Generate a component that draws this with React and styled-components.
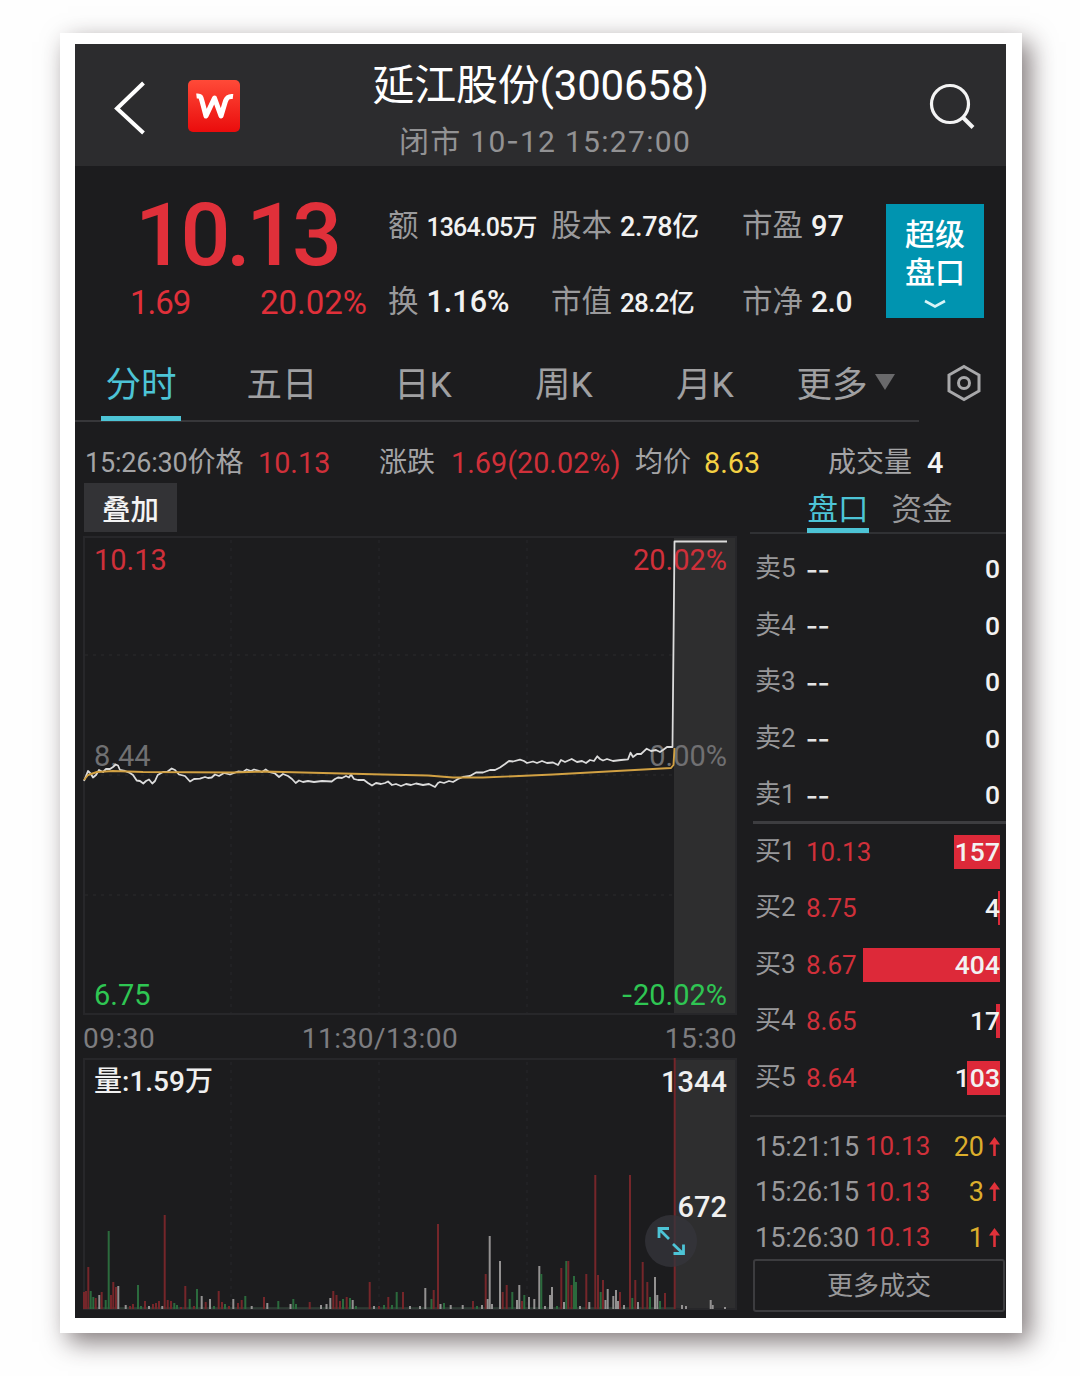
import { useState } from "react";
import styled, { createGlobalStyle } from "styled-components";

const GlobalStyle = createGlobalStyle`
* {
    box-sizing: border-box;
}
body {
    margin: 0;
    background: #fefefe;
    font-family: Roboto, "Noto Sans CJK SC", sans-serif;
}
button {
    font-family: inherit;
    border: none;
    background: none;
    padding: 0;
    margin: 0;
}
`;

const RED = "#d0303a";
const GREY = "#98989a";
const CYAN = "#4dc4d6";
const GREEN = "#2fc653";

const Page = styled.div`
width: 1080px;
height: 1376px;
padding: 33px 0 0 60px;
overflow: hidden;
`;

const Frame = styled.div`
width: 962px;
height: 1300px;
padding: 11px 16px 15px 15px;
background: #fff;
box-shadow: 8px 9px 24px 0 rgba(40, 25, 28, 0.58);
`;

const Screen = styled.main`
width: 931px;
height: 1274px;
background: #1c1c1e;
color: #f2f2f2;
overflow: hidden;
`;

const Header = styled.header`
display: grid;
grid-template-columns: 1fr auto 1fr;
height: 122px;
background: #2c2c2e;
`;

const HeaderLeft = styled.div`
display: flex;
align-items: flex-start;
padding: 36px 0 0 38px;
gap: 41px;
`;

const HeaderRight = styled.div`
display: flex;
justify-content: flex-end;
align-items: flex-start;
padding: 38px 30px 0 0;
`;

const Logo = styled.div`
width: 52px;
height: 52px;
border-radius: 5px;
background: linear-gradient(#ff4a38, #ea0c0c);
`;

const TitleBox = styled.div`
display: flex;
flex-direction: column;
align-items: center;
padding-top: 16px;
`;

const Title = styled.h1`
margin: 0;
font-size: 42px;
font-weight: 400;
line-height: 51px;
letter-spacing: -0.2px;
color: #fff;
`;

const Subtitle = styled.div`
margin-left: 9px;
font-size: 30px;
line-height: 62px;
letter-spacing: 1.3px;
color: #929294;
white-space: pre;
`;

/* Roboto's hyphen is too short for dates and signed values */
const Dash = styled.span`
font-family: "Noto Sans CJK SC", sans-serif;
font-size: 1.15em;
line-height: 1px;
`;

const Quote = styled.section`
display: grid;
grid-template-columns: 313px 163px 191px 144px 98px;
padding-top: 38px;
height: 179px;
`;

const PriceBox = styled.div`
padding-left: 55px;
color: #e0303a;
`;

const BigPrice = styled.div`
padding-left: 5px;
font-size: 88px;
font-weight: 500;
line-height: 62px;
letter-spacing: -4.4px;
`;

const ChangeRow = styled.div`
display: flex;
justify-content: space-between;
width: 237px;
margin-top: 20px;
font-size: 33px;
line-height: 34px;

span:first-child {
    letter-spacing: -1px;
}
`;

const StatColumn = styled.dl`
display: grid;
grid-template-rows: 44px 44px;
row-gap: 32px;
margin: 0;
`;

const Stat = styled.div`
display: flex;
align-items: baseline;
line-height: 44px;
white-space: nowrap;

dt {
    font-size: 30.5px;
    color: #9a9a9c;
}
dd {
    margin: 0 0 0 8px;
    font-size: ${({ $size }) => $size}px;
    font-weight: 500;
    letter-spacing: ${({ $spacing }) => $spacing || 0}px;
}
`;

const SuperButton = styled.button`
display: flex;
flex-direction: column;
align-items: center;
height: 114px;
padding-top: 12px;
background: #0094b0;
color: #fff;
font-size: 30px;
font-weight: 500;
line-height: 38px;

svg {
    margin-top: 7px;
}
`;

const TabBar = styled.nav`
display: flex;
width: 844px;
height: 77px;
padding-left: 26px;
gap: 61px;
border-bottom: 2px solid #37373a;
`;

const TabRow = styled.div`
display: flex;
justify-content: space-between;
padding-right: 25px;
`;

const Tab = styled.button`
display: flex;
align-items: center;
justify-content: center;
width: ${({ $wide }) => ($wide ? "99px" : "80px")};
height: 76px;
flex: none;
margin-left: ${({ $wide }) => ($wide ? "-10px" : "0")};
font-size: 35.5px;
color: ${({ $active }) => ($active ? CYAN : "#a0a0a2")};
border-bottom: 5px solid ${({ $active }) => ($active ? CYAN : "transparent")};
padding-top: 2px;
white-space: nowrap;

svg {
    margin-left: 7px;
}
`;

const SettingsButton = styled.button`
height: 79px;
`;

const InfoRow = styled.div`
display: grid;
grid-template-columns: 173px 121px 72px 184px 69px 124px 99px 40px;
padding-left: 10px;
height: 59px;
line-height: 78px;
color: #a4a4a6;
white-space: nowrap;
`;

const Info = styled.span`
font-size: ${({ $label }) => ($label ? "28px" : "28.8px")};
color: ${({ $color }) => $color || "inherit"};
font-weight: ${({ $bold }) => ($bold ? 500 : 400)};
`;

const Clock = styled.span`
font-size: 27px;
letter-spacing: -0.2px;
`;

const Columns = styled.div`
display: grid;
grid-template-columns: 654px 256px;
column-gap: 13px;
padding-left: 8px;
`;

const OverlayButton = styled.button`
display: block;
width: 93px;
height: 49px;
margin: 0 0 4px 1px;
background: #333336;
color: #f4f4f4;
font-size: 28.5px;
font-weight: 500;
`;

const ChartBox = styled.div`
position: relative;
height: ${({ $height }) => $height}px;

> svg {
    display: block;
}
`;

const ChartLabel = styled.span`
position: absolute;
top: ${({ $top }) => $top}px;
${({ $right }) => ($right ? "right: 10px;" : "left: 11px;")}
font-size: ${({ $size }) => $size || 29}px;
font-weight: ${({ $bold }) => ($bold ? 500 : 400)};
line-height: 36px;
color: ${({ $color }) => $color};
`;

const TimeAxis = styled.div`
display: flex;
justify-content: space-between;
height: 43px;
font-size: 28px;
line-height: 47px;
letter-spacing: 0.5px;
color: #7d7d80;

span:nth-child(2) {
    margin-right: 60px;
}
`;

const ExpandButton = styled.button`
position: absolute;
left: 562px;
top: 157px;
width: 52px;
height: 52px;
border-radius: 50%;
background: rgba(54, 54, 60, 0.75);
`;

const BookTabs = styled.div`
display: flex;
gap: 22px;
height: 51px;
padding-left: 57px;
border-bottom: 2px solid #303134;
`;

const BookTab = styled.button`
width: 62px;
height: 50px;
font-size: 30.5px;
padding-top: 2px;
color: ${({ $active }) => ($active ? CYAN : "#98989a")};
border-bottom: 5px solid ${({ $active }) => ($active ? CYAN : "transparent")};
`;

const BookSide = styled.div`
padding-top: ${({ $top }) => $top}px;
`;

const BookRow = styled.div`
display: grid;
grid-template-columns: 51px 1fr auto;
align-items: center;
height: 56.5px;
padding: 0 6px 0 5px;
font-size: 26.5px;
`;

const Level = styled.span`
line-height: 34px;
margin-top: -2px;
font-size: 26px;
color: ${GREY};
`;

const BookPrice = styled.span`
line-height: 34px;
font-size: 26px;
color: ${RED};
`;

const EmptyPrice = styled.span`
margin-top: -5px;
font-family: "Noto Sans CJK SC", sans-serif;
font-size: 34px;
line-height: 34px;
color: #e4e4e4;
`;

const Quantity = styled.span`
position: relative;
font-size: 26.5px;
font-weight: 500;
line-height: 34px;
color: #f2f2f2;
`;

const QuantityBar = styled.i`
position: absolute;
right: 0;
top: 0;
height: 34px;
background: #dd2939;
`;

const QuantityText = styled.span`
position: relative;
`;

const BookDivider = styled.div`
height: 3px;
margin: -3px 0 0 3px;
background: #3d3d40;
`;

const Trades = styled.div`
margin-top: 9px;
padding-top: 7px;
border-top: 2px solid #303032;
`;

const Trade = styled.div`
display: grid;
grid-template-columns: 110px 76px 1fr 16px;
align-items: center;
height: 45.5px;
padding: 0 6px 0 5px;
font-size: 27px;
color: ${GREY};
`;

const TradePrice = styled.span`
color: ${RED};
font-size: 26px;
line-height: 32px;
margin-top: -1px;
`;

const TradeCount = styled.span`
color: #dcae2c;
text-align: right;
`;

const MoreButton = styled.button`
display: block;
width: 252px;
height: 53px;
margin: -2px 0 0 3px;
padding-bottom: 3px;
border: 2px solid #3c3c3f;
border-radius: 3px;
font-size: 26px;
color: ${GREY};
`;

const TABS = ["分时", "五日", "日K", "周K", "月K", "更多"];

const SELLS = [5, 4, 3, 2, 1];

const BUYS = [
    { level: 1, price: "10.13", amount: 157, bar: 46 },
    { level: 2, price: "8.75", amount: 4, bar: 2 },
    { level: 3, price: "8.67", amount: 404, bar: 137 },
    { level: 4, price: "8.65", amount: 17, bar: 4 },
    { level: 5, price: "8.64", amount: 103, bar: 33 },
];

const TRADES = [
    { time: "15:21:15", price: "10.13", count: 20 },
    { time: "15:26:15", price: "10.13", count: 3 },
    { time: "15:26:30", price: "10.13", count: 1 },
];

const PRICE_LINE =
    "1,245 5,235 8,238 10,241.5 13,239 16,234 20,236 23,233 27,233 30,231 32.7,228.5 35,229.5 37,234 42,235 47,237 50,239 " +
    "53.7,244.5 57,245 60.3,247.5 63,245 66,243.5 69.3,247.5 72,245 74.7,239 80,236 84,236 88.7,232.5 92,234 96,238.5 102,240 " +
    "107,245.5 111,243 117,242.7 122,241 125,242 128.7,241.5 132,238.5 136,240 141,237 147,238.5 155,235.5 160,236 163.7,233.5 " +
    "168,235 171,233.5 175,234.5 179,236 182.7,233.5 186,236 192,237.5 196,241 200,238 205,240 209,243 212.7,247 216,244.5 " +
    "220,246 225,245 231,246 239,245 248.7,245.5 252,243 255,241.5 259,242 263,240 266,241.5 268,238.5 271,243 275,244 281,244 " +
    "285,247 289,249.5 293,247 298,248 302,247 305,245.5 309,249 313,248 318,250 323,248 328,249 333,247.5 340,249 346,248 " +
    "352,251 355,247 357,246 361,247 366,245 370,246 375,243 380,241 387,240 393,236.5 400,236.5 407,234 412,234 417,231.5 422,228 " +
    "426,225 430,225.5 437,223.7 441,225 444,227 450,225.5 454,227 459,225 464,227 470,226.5 475,229 478,224 482,226 488.7,223 " +
    "494,226 499,225 503,227 507,224 511,225 514.3,220.3 517,223 520,224.5 524,223 530,225 538,224 545,223.3 547.5,216.7 550,221 " +
    "554,218 558,218 563.7,212.7 568,215 573,214 577,216 580,214 584,211 588.7,211 589.5,211 591.5,5.5 644,5.5";

const AVERAGE_LINE = "1,244 5,239 14,236 30,235 60,236 150,236.5 180,235.5 300,238.5 345,239.5 370,241.5 400,241.5 470,238.5 588,232 590.5,229 591.5,212";

// x, height, colour
const VOLUME = [
    [1, 17, "r"], [3, 18, "r"], [5.3, 42, "r"], [7.7, 18, "g"], [10.3, 12, "g"], [12.7, 11, "r"], [16.3, 14, "w"],
    [18.7, 17, "r"], [22.7, 9, "g"], [25.7, 78, "g"], [28, 14, "r"], [30.3, 27, "r"], [33, 22, "r"], [35.3, 23, "w"],
    [42.7, 4, "w"], [47, 3, "r"], [50, 5, "r"], [55, 24, "g"], [58, 3, "g"], [62, 8, "r"], [66, 3, "w"], [70, 5, "r"],
    [73, 6, "r"], [76, 8, "r"], [79.3, 3, "w"], [81.7, 94, "r"], [84.7, 9, "r"], [88, 8, "r"], [91.3, 6, "g"],
    [94, 4, "g"], [98, 2, "r"], [102.3, 23, "r"], [106.7, 10, "g"], [111, 3, "r"], [114, 20, "g"], [118.7, 13, "w"],
    [122.7, 7, "r"], [127, 10, "w"], [131, 3, "g"], [135.7, 18, "r"], [139, 7, "r"], [142, 5, "g"], [146, 3, "r"],
    [150.3, 10, "w"], [155, 6, "r"], [158.7, 9, "r"], [162.3, 13, "g"], [168.7, 3, "w"], [181, 12, "r"],
    [184.3, 6, "w"], [195.3, 8, "g"], [207.5, 5, "w"], [210.3, 10, "g"], [213, 5, "g"], [226.7, 7, "r"],
    [238, 4, "w"], [243.5, 5, "w"], [247.3, 11, "w"], [250.3, 18, "r"], [253.5, 14, "r"], [257, 8, "r"],
    [260, 10, "g"], [263.7, 12, "r"], [267, 11, "g"], [269.7, 9, "w"], [273, 3, "g"], [286.7, 27, "r"],
    [291, 3, "w"], [296, 3, "r"], [301, 4, "g"], [305.3, 12, "r"], [309, 4, "g"], [313.7, 17, "g"], [320, 17, "r"],
    [327, 3, "w"], [337, 3, "w"], [342.3, 21, "w"], [348.5, 10, "g"], [350.7, 19, "r"], [355, 85, "r"],
    [357.5, 5, "w"], [361, 6, "g"], [367.7, 4, "w"], [379.7, 4, "w"], [390, 8, "r"], [394, 3, "g"], [399, 4, "w"],
    [402.7, 35, "r"], [404.7, 10, "w"], [406.7, 73, "w"], [409, 5, "w"], [417, 48, "w"], [419.7, 17, "r"],
    [423.7, 24, "r"], [429.3, 17, "g"], [434, 9, "w"], [436.3, 24, "w"], [439, 8, "r"], [441.3, 14, "g"],
    [446, 12, "w"], [451.3, 10, "w"], [456.3, 43, "w"], [458.3, 35, "g"], [462, 3, "w"], [467, 14, "w"],
    [469, 22, "w"], [474, 3, "g"], [478.3, 41, "r"], [481, 7, "w"], [483.3, 48, "g"], [485.3, 48, "r"],
    [488.5, 24, "r"], [491, 33, "g"], [493, 27, "g"], [497, 3, "w"], [503.3, 35, "r"], [506.3, 7, "w"],
    [512.3, 134, "r"], [515, 34, "r"], [517.7, 17, "g"], [520, 29, "r"], [522.5, 9, "w"], [524.7, 20, "w"],
    [530.3, 13, "w"], [533, 19, "w"], [535, 8, "w"], [537, 17, "r"], [541, 4, "w"], [547, 134, "r"], [549.3, 11, "g"],
    [552.3, 29, "r"], [555, 7, "w"], [559.7, 47, "r"], [564.3, 27, "r"], [567, 12, "g"], [572, 32, "w"],
    [574.3, 14, "w"], [577, 8, "g"], [582, 16, "r"], [591.7, 251, "r"], [599, 4, "w"], [603, 3, "w"],
    [627.7, 9, "w"], [629.7, 4, "w"], [642, 2, "w"],
];

const VOLUME_COLORS = { r: "#75262a", g: "#2b6a3d", w: "#939191" };

function Grid({ height, rows }) {
    return (
        <g fill="none" stroke="#262628" strokeWidth="1.3">
            <rect x="591" y="0" width="63" height={height} fill="#2e2e2f" stroke="none" />
            <g strokeDasharray="3 5">
                {[148, 296, 444].map((x) => <path key={x} d={`M${x} 4V${height}`} />)}
                {rows.map((y) => <path key={y} d={`M2 ${y}H591`} />)}
            </g>
            <rect x="1" y="1" width="652" height={height - 2} stroke="#27272a" strokeWidth="2" />
        </g>
    );
}

const ChartLines = styled.svg`
position: absolute;
left: 0;
top: 0;
`;

function PriceChart() {
    return (
        <ChartBox $height={479}>
            <svg width="654" height="479">
                <Grid height={479} rows={[119, 239, 359]} />
            </svg>
            <ChartLabel $top={6} $color="#cf303a">10.13</ChartLabel>
            <ChartLabel $top={6} $color="#cf303a" $right>20.02%</ChartLabel>
            <ChartLabel $top={202} $color="#707072">8.44</ChartLabel>
            <ChartLabel $top={202} $color="#707072" $right>0.00%</ChartLabel>
            <ChartLabel $top={441} $color={GREEN}>6.75</ChartLabel>
            <ChartLabel $top={441} $color={GREEN} $right><Dash>-</Dash>20.02%</ChartLabel>
            <ChartLines width="654" height="479" fill="none" strokeLinejoin="round">
                <polyline points={PRICE_LINE} stroke="#dcdcdc" strokeWidth="1.8" />
                <polyline points={AVERAGE_LINE} stroke="#d2a143" strokeWidth="1.9" />
            </ChartLines>
        </ChartBox>
    );
}

function VolumeChart() {
    return (
        <ChartBox $height={252}>
            <svg width="654" height="252">
                <Grid height={252} rows={[]} />
                <path d="M2 250H591" stroke="#385040" strokeWidth="1" />
                {VOLUME.map(([x, height, color]) => (
                    <rect key={x} x={x - 1} y={251 - height} width="2" height={height} fill={VOLUME_COLORS[color]} />
                ))}
            </svg>
            <ChartLabel $top={6} $size={28} $color="#f0f0f0" $bold>量:1.59万</ChartLabel>
            <ChartLabel $top={6} $color="#f0f0f0" $right $bold>1344</ChartLabel>
            <ExpandButton>
                <svg width="52" height="52" fill="none" stroke={CYAN} strokeWidth="2.8">
                    <path d="M24 24L14 14M14 23V13.5H24M28 29L38 38.500M38.500 29.500V38.500H28.500" />
                </svg>
            </ExpandButton>
            <ChartLabel $top={131} $color="#f0f0f0" $right $bold>672</ChartLabel>
        </ChartBox>
    );
}

function OrderBook() {
    return (
        <>
            <BookSide $top={7}>
                {SELLS.map((level) => (
                    <BookRow key={level}>
                        <Level>卖{level}</Level>
                        <EmptyPrice>--</EmptyPrice>
                        <Quantity>0</Quantity>
                    </BookRow>
                ))}
            </BookSide>
            <BookDivider />
            <BookSide $top={0}>
                {BUYS.map((item) => (
                    <BookRow key={item.level}>
                        <Level>买{item.level}</Level>
                        <BookPrice>{item.price}</BookPrice>
                        <Quantity>
                            <QuantityBar style={{ width: item.bar }} />
                            <QuantityText>{item.amount}</QuantityText>
                        </Quantity>
                    </BookRow>
                ))}
            </BookSide>
            <Trades>
                {TRADES.map((trade) => (
                    <Trade key={trade.time}>
                        <span>{trade.time}</span>
                        <TradePrice>{trade.price}</TradePrice>
                        <TradeCount>{trade.count}</TradeCount>
                        <svg width="16" height="22" fill="none" stroke="#e0323a" strokeWidth="2.6">
                            <path d="M10.500 20V4" />
                            <path d="M5 8.500L10.500 1L16 8.500Z" fill="#e0323a" stroke="none" />
                        </svg>
                    </Trade>
                ))}
            </Trades>
            <MoreButton>更多成交</MoreButton>
        </>
    );
}

function App() {
    const [tab, setTab] = useState("分时");
    const [book, setBook] = useState("盘口");

    return (
        <Page>
            <GlobalStyle />
            <Frame>
                <Screen>
                    <Header>
                        <HeaderLeft>
                            <svg width="34" height="56" fill="none" stroke="#fff" strokeWidth="4">
                                <path d="M30.500 3L4 28.500L30.500 53" />
                            </svg>
                            <Logo>
                                <svg width="52" height="52" fill="none" stroke="#fff" strokeWidth="5" strokeLinejoin="round">
                                    <path d="M8.500 16C12.500 15.500 13 17 14 21L18 36L26.500 18L33 36L37.500 21C39 17 41 16 45 16.500" />
                                </svg>
                            </Logo>
                        </HeaderLeft>
                        <TitleBox>
                            <Title>延江股份(300658)</Title>
                            <Subtitle>闭市 10<Dash>-</Dash>12 15:27:00</Subtitle>
                        </TitleBox>
                        <HeaderRight>
                            <svg width="48" height="50" fill="none" stroke="#f4f4f4" strokeWidth="3.2">
                                <circle cx="22" cy="22" r="18.500" />
                                <path d="M34.500 35L45 45.500" strokeWidth="4" />
                            </svg>
                        </HeaderRight>
                    </Header>

                    <Quote>
                        <PriceBox>
                            <BigPrice>10.13</BigPrice>
                            <ChangeRow>
                                <span>1.69</span>
                                <span>20.02%</span>
                            </ChangeRow>
                        </PriceBox>
                        <StatColumn>
                            <Stat $size={25} $spacing={-0.9}><dt>额</dt><dd>1364.05万</dd></Stat>
                            <Stat $size={30.5}><dt>换</dt><dd>1.16%</dd></Stat>
                        </StatColumn>
                        <StatColumn>
                            <Stat $size={27} $spacing={-0.3}><dt>股本</dt><dd>2.78亿</dd></Stat>
                            <Stat $size={26} $spacing={-0.7}><dt>市值</dt><dd>28.2亿</dd></Stat>
                        </StatColumn>
                        <StatColumn>
                            <Stat $size={29}><dt>市盈</dt><dd>97</dd></Stat>
                            <Stat $size={30} $spacing={-0.5}><dt>市净</dt><dd>2.0</dd></Stat>
                        </StatColumn>
                        <SuperButton>
                            <span>超级</span>
                            <span>盘口</span>
                            <svg width="22" height="10" fill="none" stroke="#d8f4f8" strokeWidth="2.6">
                                <path d="M1 2L11 7.500L21 2" />
                            </svg>
                        </SuperButton>
                    </Quote>

                    <TabRow>
                        <TabBar>
                            {TABS.map((name) => (
                                <Tab key={name} $active={tab === name} $wide={name === "更多"} onClick={() => setTab(name)}>
                                    {name}
                                    {name === "更多" && (
                                        <svg width="20" height="16"><path d="M0 0H20L10 16Z" fill="#69696b" /></svg>
                                    )}
                                </Tab>
                            ))}
                        </TabBar>
                        <SettingsButton>
                            <svg width="34" height="38" fill="none" stroke="#a8a8aa" strokeWidth="3">
                                <path d="M17 2.500L32 11V27L17 35.500L2 27V11Z" />
                                <circle cx="17" cy="19" r="5.500" />
                            </svg>
                        </SettingsButton>
                    </TabRow>

                    <InfoRow>
                        <Info $label><Clock>15:26:30</Clock>价格</Info>
                        <Info $color={RED}>10.13</Info>
                        <Info $label>涨跌</Info>
                        <Info $color={RED}>1.69(20.02%)</Info>
                        <Info $label>均价</Info>
                        <Info $color="#f4d043">8.63</Info>
                        <Info $label>成交量</Info>
                        <Info $color="#f4f4f4" $bold>4</Info>
                    </InfoRow>

                    <Columns>
                        <div>
                            <OverlayButton>叠加</OverlayButton>
                            <PriceChart />
                            <TimeAxis>
                                <span>09:30</span>
                                <span>11:30/13:00</span>
                                <span>15:30</span>
                            </TimeAxis>
                            <VolumeChart />
                        </div>
                        <div>
                            <BookTabs>
                                {["盘口", "资金"].map((name) => (
                                    <BookTab key={name} $active={book === name} onClick={() => setBook(name)}>{name}</BookTab>
                                ))}
                            </BookTabs>
                            <OrderBook />
                        </div>
                    </Columns>
                </Screen>
            </Frame>
        </Page>
    );
}

export default App;
